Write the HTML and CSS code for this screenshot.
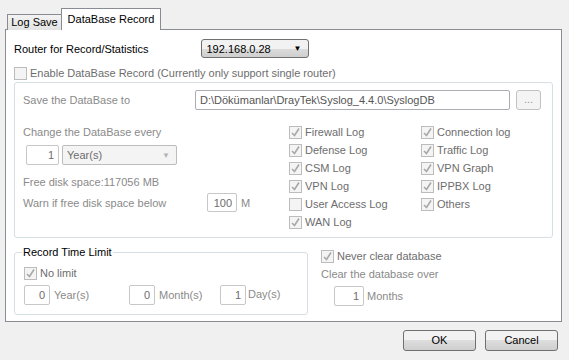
FILE: index.html
```html
<!DOCTYPE html>
<html lang="en">

<head>
    <meta charset="UTF-8">
    <title>DataBase Record</title>
    <link rel="stylesheet" href="styles.css">
</head>

<body>
    <div class="dialog">

        <!-- tabs -->
        <div class="tabs">
            <div class="tab">Log Save</div>
            <div class="tab active">DataBase Record</div>
        </div>

        <!-- tab page -->
        <div class="panel">
            <div class="router-row">
                <span class="black">Router for Record/Statistics</span>
                <div class="select">
                    <span>192.168.0.28</span>
                    <span class="arrow">&#9660;</span>
                </div>
            </div>

            <div class="check enable">
                <span class="cb"></span>
                <span>Enable DataBase Record (Currently only support single router)</span>
            </div>

            <div class="group db-group">
                <div class="path-row">
                    <span class="label path-label">Save the DataBase to</span>
                    <div class="input path">D:\Dökümanlar\DrayTek\Syslog_4.4.0\SyslogDB</div>
                    <div class="browse">...</div>
                </div>

                <div class="db-body">
                    <div class="db-left">
                        <div class="label line">Change the DataBase every</div>
                        <div class="every-row">
                            <div class="input num every-num">1</div>
                            <div class="combo">
                                <span>Year(s)</span>
                                <span class="combo-arrow">&#9660;</span>
                            </div>
                        </div>
                        <div class="label line free">Free disk space:117056 MB</div>
                        <div class="warn-row">
                            <span class="label warn-label">Warn if free disk space below</span>
                            <div class="input num warn-num">100</div>
                            <span class="label">M</span>
                        </div>
                    </div>

                    <div class="logs">
                        <div class="check"><span class="cb on"></span><span>Firewall Log</span></div>
                        <div class="check"><span class="cb on"></span><span>Connection log</span></div>
                        <div class="check"><span class="cb on"></span><span>Defense Log</span></div>
                        <div class="check"><span class="cb on"></span><span>Traffic Log</span></div>
                        <div class="check"><span class="cb on"></span><span>CSM Log</span></div>
                        <div class="check"><span class="cb on"></span><span>VPN Graph</span></div>
                        <div class="check"><span class="cb on"></span><span>VPN Log</span></div>
                        <div class="check"><span class="cb on"></span><span>IPPBX Log</span></div>
                        <div class="check"><span class="cb"></span><span>User Access Log</span></div>
                        <div class="check"><span class="cb on"></span><span>Others</span></div>
                        <div class="check"><span class="cb on"></span><span>WAN Log</span></div>
                    </div>
                </div>
            </div>

            <div class="bottom">
                <fieldset class="group time-group">
                    <legend>Record Time Limit</legend>
                    <div class="check nolimit"><span class="cb on"></span><span>No limit</span></div>
                    <div class="time-row">
                        <div class="input num small">0</div>
                        <span class="label unit year">Year(s)</span>
                        <div class="input num small">0</div>
                        <span class="label unit month">Month(s)</span>
                        <div class="input num small">1</div>
                        <span class="label unit day">Day(s)</span>
                    </div>
                </fieldset>

                <div class="clear-box">
                    <div class="check"><span class="cb on"></span><span>Never clear database</span></div>
                    <div class="label line clear-line">Clear the database over</div>
                    <div class="months-row">
                        <div class="input num months">1</div>
                        <span class="label">Months</span>
                    </div>
                </div>
            </div>
        </div>

        <!-- buttons -->
        <div class="buttons">
            <div class="btn">OK</div>
            <div class="btn">Cancel</div>
        </div>
    </div>
</body>

</html>
```

FILE: styles.css
```css
* {
    box-sizing: border-box;
}

body {
    margin: 0;
    background-color: #f0f0f0;
    font-family: "Liberation Sans", Arial, sans-serif;
    font-size: 11px;
    color: #000;
}

.dialog {
    width: 569px;
    height: 360px;
    padding-top: 8px;
}

/* tabs */
.tabs {
    display: flex;
    align-items: flex-end;
    height: 22px;
    padding-left: 7px;
}

.tab {
    height: 16px;
    width: 55px;
    line-height: 15px;
    text-align: center;
    border: 1px solid #898c95;
    border-bottom: none;
    background: linear-gradient(#f3f3f3, #e3e3e3);
}

.tab.active {
    position: relative;
    z-index: 1;
    width: 100px;
    height: 22px;
    margin-left: -1px;
    line-height: 20px;
    background: #fff;
}

.panel {
    margin: -1px 0 0 5px;
    width: 557px;
    height: 293px;
    border: 1px solid #898c95;
    background-color: #fff;
    padding: 8px 0 0 8px;
}

.black {
    color: #000;
}

.label {
    color: #8a8a8a;
}

.line {
    height: 14px;
    line-height: 14px;
}

/* router */
.router-row {
    display: flex;
    align-items: center;
    height: 19px;
    margin-top: 1px;
}

.select {
    display: flex;
    justify-content: space-between;
    align-items: center;
    width: 108px;
    height: 19px;
    margin-left: 52px;
    padding: 0 6px 0 5px;
    border: 1px solid #707070;
    border-radius: 3px;
    background: linear-gradient(#f2f2f2 50%, #dcdcdc 50%, #cfcfcf);
}

.arrow {
    font-size: 8px;
}

/* checkbox */
.check {
    display: flex;
    align-items: center;
    height: 18px;
    color: #6d6d6d;
}

.cb {
    display: inline-block;
    width: 13px;
    height: 13px;
    margin-right: 3px;
    border: 1px solid #bcbcbc;
    background: #f4f4f4;
}

.cb.on {
    background: #f4f4f4 url("data:image/svg+xml,%3Csvg xmlns='http://www.w3.org/2000/svg' width='11' height='11'%3E%3Cpath d='M2 6 L4.5 8.5 L9 1.5' fill='none' stroke='%23a8a8a8' stroke-width='1.6'/%3E%3C/svg%3E") no-repeat center;
}

.enable {
    margin-top: 6px;
}

/* groups */
.group {
    border: 1px solid #d5dfe5;
    border-radius: 3px;
}

.db-group {
    width: 539px;
    height: 156px;
    margin-top: 0;
    padding: 7px 0 0 8px;
}

.path-row {
    display: flex;
    align-items: center;
    height: 20px;
}

.path-label {
    width: 172px;
}

.input {
    height: 20px;
    line-height: 18px;
    border: 1px solid #c7c7c7;
    border-radius: 2px;
    background: #fff;
    padding: 0 4px;
    color: #555;
}

.path {
    width: 315px;
    border-color: #abadb3;
}

.browse {
    width: 25px;
    height: 20px;
    margin-left: 6px;
    border: 1px solid #c2c2c2;
    border-radius: 3px;
    background: #f4f4f4;
    text-align: center;
    line-height: 16px;
    color: #9a9a9a;
}

.db-body {
    display: flex;
    margin-top: 15px;
}

.db-left {
    width: 266px;
}

.num {
    text-align: right;
    color: #6d6d6d;
}

.every-row {
    display: flex;
    margin: 6px 0 0 3px;
}

.every-num {
    width: 33px;
}

.combo {
    display: flex;
    justify-content: space-between;
    align-items: center;
    width: 115px;
    height: 20px;
    margin-left: 3px;
    padding: 0 6px 0 4px;
    border: 1px solid #bcbcbc;
    border-radius: 2px;
    background: #f4f4f4;
    color: #6d6d6d;
}

.combo-arrow {
    font-size: 8px;
    color: #b5b5b5;
}

.free {
    margin-top: 10px;
}

.warn-row {
    display: flex;
    align-items: center;
    margin-top: 4px;
}

.warn-label {
    width: 184px;
}

.warn-num {
    width: 30px;
    height: 19px;
    margin-right: 4px;
}

.logs {
    display: grid;
    grid-template-columns: 132px 120px;
    margin-top: -2px;
}

/* bottom area */
.bottom {
    display: flex;
    margin-top: 7px;
}

.time-group {
    width: 294px;
    height: 70px;
    margin: 0;
    padding: 0 0 0 9px;
    min-width: 0;
}

.time-group legend {
    padding: 0 1px;
    margin-left: -2px;
    line-height: 14px;
    height: 14px;
}

.nolimit {
    margin-top: 5px;
}

.time-row {
    display: flex;
    align-items: center;
    margin-top: 3px;
}

.small {
    width: 26px;
    height: 20px;
}

.unit {
    margin-left: 4px;
}

.year {
    width: 75px;
}

.month {
    width: 61px;
}

.day {
    margin-top: -3px;
    margin-left: 2px;
}

.clear-box {
    margin: 2px 0 0 13px;
}

.clear-line {
    margin-top: 2px;
}

.months-row {
    display: flex;
    align-items: center;
    margin: 5px 0 0 13px;
}

.months {
    width: 30px;
    margin-right: 3px;
}

/* buttons */
.buttons {
    display: flex;
    justify-content: flex-end;
    gap: 9px;
    margin-top: 8px;
    padding-right: 11px;
}

.btn {
    width: 73px;
    height: 21px;
    line-height: 19px;
    text-align: center;
    border: 1px solid #707070;
    border-radius: 3px;
    background: linear-gradient(#f2f2f2 50%, #dddddd 50%, #cfcfcf);
}
```
